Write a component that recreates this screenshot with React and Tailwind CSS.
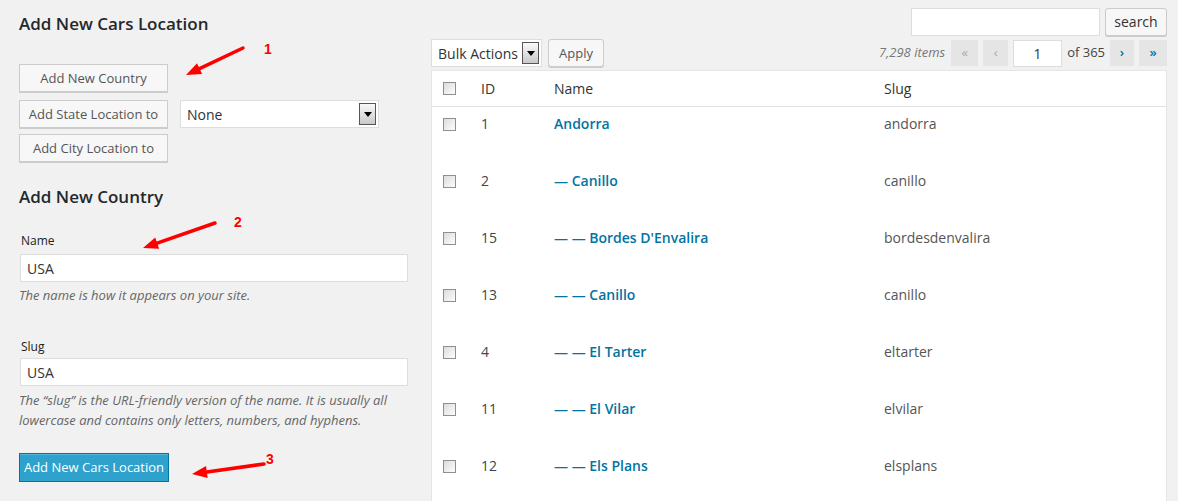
const rows = [
  { id: "1", name: "Andorra", slug: "andorra" },
  { id: "2", name: "— Canillo", slug: "canillo" },
  { id: "15", name: "— — Bordes D'Envalira", slug: "bordesdenvalira" },
  { id: "13", name: "— — Canillo", slug: "canillo" },
  { id: "4", name: "— — El Tarter", slug: "eltarter" },
  { id: "11", name: "— — El Vilar", slug: "elvilar" },
  { id: "12", name: "— — Els Plans", slug: "elsplans" },
];

function Arrow({ from, to, label, labelAt }) {
  const dx = to[0] - from[0];
  const dy = to[1] - from[1];
  const len = Math.hypot(dx, dy);
  const ux = dx / len;
  const uy = dy / len;
  const bx = to[0] - ux * 15;
  const by = to[1] - uy * 15;
  const px = -uy * 6;
  const py = ux * 6;
  return (
    <g>
      <line x1={from[0]} y1={from[1]} x2={bx} y2={by} stroke="#f00" strokeWidth="3.5" strokeLinecap="round" />
      <polygon points={`${to[0]},${to[1]} ${bx + px},${by + py} ${bx - px},${by - py}`} fill="#f00" />
      <text x={labelAt[0]} y={labelAt[1]} fill="#f00" fontSize="14" fontWeight="700" fontFamily="Liberation Sans, Arial, sans-serif" textAnchor="middle">
        {label}
      </text>
    </g>
  );
}

function Checkbox() {
  return <span className="block h-[13px] w-[13px] border border-[#8f8f8f] bg-gradient-to-br from-[#dcdcdc] to-[#fdfdfd]" />;
}

function SelectArrow() {
  return (
    <span className="flex h-[22px] w-[17px] items-center justify-center border border-[#555] bg-gradient-to-b from-[#fafafa] to-[#c9c9c9]">
      <svg width="8" height="5" viewBox="0 0 8 5">
        <polygon points="0,0 8,0 4,5" fill="#000" />
      </svg>
    </span>
  );
}

function Button({ children, className = "" }) {
  return (
    <button
      type="button"
      className={`h-[28px] whitespace-nowrap border border-[#cccccc] bg-[#f7f7f7] px-[6px] text-[13px] leading-none text-[#555] shadow-[0_1px_0_#ccc] ${className}`}
    >
      {children}
    </button>
  );
}

export default function App() {
  return (
    <div className="relative flex h-[501px] w-[1178px] overflow-hidden bg-[#f1f1f1] font-['Open_Sans',sans-serif] text-[#444]">
      <div className="ml-[19px] w-[389px] shrink-0">
        <h2 className="mt-[12px] text-[17px] font-semibold leading-[24px] text-[#23282d]">Add New Cars Location</h2>

        <Button className="mt-[28px] w-[149px]">Add New Country</Button>
        <div className="mt-[8px] flex items-center">
          <Button className="w-[149px]">Add State Location to</Button>
          <div className="ml-[12px] flex h-[28px] w-[199px] items-center justify-between border border-[#dddddd] bg-white pl-[6px] pr-[2px] text-[14px] text-[#333]">
            <span>None</span>
            <SelectArrow />
          </div>
        </div>
        <Button className="mt-[6px] w-[149px]">Add City Location to</Button>

        <h3 className="mt-[23px] text-[17px] font-semibold leading-[24px] text-[#23282d]">Add New Country</h3>

        <label className="ml-[2px] mt-[24px] block text-[12px] leading-[16px] text-[#222]">Name</label>
        <div className="ml-[1px] mt-[5px] flex h-[28px] items-center border border-[#dddddd] bg-white px-[6px] text-[14px] text-[#333]">
          USA
        </div>
        <p className="mt-[3px] text-[13px] italic leading-[20px] text-[#666]">The name is how it appears on your site.</p>

        <label className="ml-[2px] mt-[34px] block text-[12px] leading-[16px] text-[#222]">Slug</label>
        <div className="ml-[1px] mt-[3px] flex h-[28px] items-center border border-[#dddddd] bg-white px-[6px] text-[14px] text-[#333]">
          USA
        </div>
        <p className="mt-[4px] text-[13px] italic leading-[20px] text-[#666]">
          The “slug” is the URL-friendly version of the name. It is usually all lowercase and contains only letters, numbers, and hyphens.
        </p>

        <button
          type="button"
          className="mt-[23px] h-[29px] w-[150px] border border-[#0074a2] bg-[#2ea2cc] text-[13px] text-white shadow-[inset_0_1px_0_rgba(120,200,230,0.5)]"
        >
          Add New Cars Location
        </button>
      </div>

      <div className="ml-[23px] flex w-[736px] shrink-0 flex-col">
        <div className="mt-[8px] flex justify-end">
          <div className="h-[28px] w-[189px] border border-[#dddddd] bg-white" />
          <Button className="ml-[5px] w-[62px] rounded-[3px] !text-[14px] !text-[#333]">search</Button>
        </div>

        <div className="mt-[3px] flex h-[28px] items-center justify-between">
          <div className="flex items-center">
            <div className="flex h-[28px] w-[111px] items-center justify-between border border-[#dddddd] bg-white pl-[6px] pr-[2px] text-[14px] text-[#333]">
              <span>Bulk Actions</span>
              <SelectArrow />
            </div>
            <Button className="ml-[6px] w-[56px] rounded-[3px] !text-[#555]">Apply</Button>
          </div>
          <div className="flex items-center text-[13px]">
            <span className="mr-[6px] italic text-[#777]">7,298 items</span>
            <span className="flex h-[26px] w-[27px] items-center justify-center bg-[#e5e5e5] text-[#aaa]">«</span>
            <span className="ml-[5px] flex h-[26px] w-[25px] items-center justify-center bg-[#e5e5e5] text-[#aaa]">‹</span>
            <span className="ml-[5px] flex h-[27px] w-[49px] items-center justify-center border border-[#dddddd] bg-white text-[14px] text-[#333]">1</span>
            <span className="ml-[5px] text-[13px] text-[#444]">of 365</span>
            <span className="ml-[5px] flex h-[26px] w-[24px] items-center justify-center bg-[#e5e5e5] font-semibold text-[#0074a2]">›</span>
            <span className="ml-[5px] flex h-[26px] w-[28px] items-center justify-center bg-[#e5e5e5] font-semibold text-[#0074a2]">»</span>
          </div>
        </div>

        <div className="mt-[3px] border border-[#e5e5e5] bg-white">
          <div className="flex h-[36px] items-center border-b border-[#e1e1e1] text-[14px] text-[#333]">
            <div className="w-[49px] pl-[11px]">
              <Checkbox />
            </div>
            <div className="w-[73px]">ID</div>
            <div className="w-[330px]">Name</div>
            <div>Slug</div>
          </div>
          {rows.map((row) => (
            <div key={row.id} className="flex h-[57px] items-start pt-[8px] text-[14px] leading-[18px]">
              <div className="flex h-[18px] w-[49px] items-center pl-[11px]">
                <Checkbox />
              </div>
              <div className="w-[73px] text-[#444]">{row.id}</div>
              <div className="w-[330px] font-semibold text-[#0074a2]">{row.name}</div>
              <div className="text-[#555]">{row.slug}</div>
            </div>
          ))}
        </div>
      </div>

      <svg className="pointer-events-none absolute left-0 top-0" width="1178" height="501">
        <Arrow from={[243, 48]} to={[186, 75]} label="1" labelAt={[268, 54]} />
        <Arrow from={[215, 223]} to={[143, 248]} label="2" labelAt={[238, 227]} />
        <Arrow from={[264, 464]} to={[192, 474]} label="3" labelAt={[270, 464]} />
      </svg>
    </div>
  );
}
